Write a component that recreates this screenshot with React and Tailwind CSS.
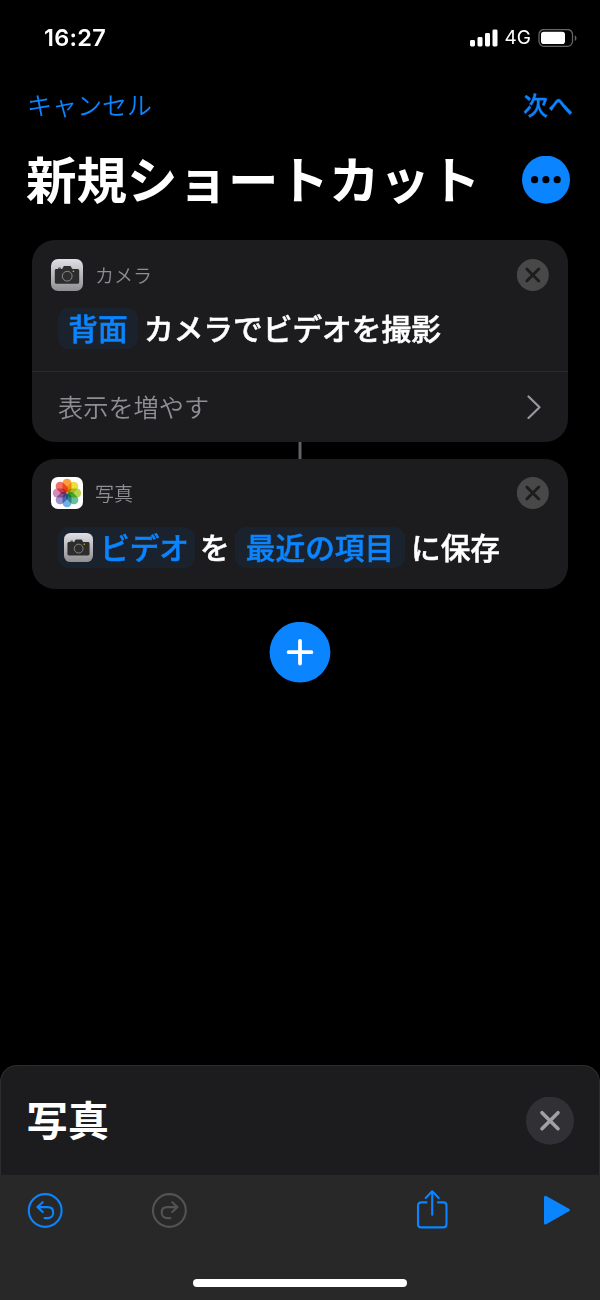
import React from "react";

const PETALS = ["#fb9f3c", "#efdf3a", "#b4d650", "#66c09a", "#6fb0e0", "#9d92cc", "#d48abd", "#f2716a"];

function CameraIcon({ className }) {
  return (
    <svg viewBox="0 0 32 32" className={className}>
      <defs>
        <linearGradient id="cameraTile" x1="0" y1="0" x2="0" y2="1">
          <stop offset="0" stopColor="#e0dfe4" />
          <stop offset="1" stopColor="#8f8e93" />
        </linearGradient>
      </defs>
      <rect width="32" height="32" rx="7" fill="url(#cameraTile)" />
      <path d="M7 9.200Q7 8.400 7.800 8.400H9.200Q10 8.400 10 9.200V11H7z" fill="#56565a" />
      <path d="M5.600 10H10.600C11.500 10 11.600 9.500 12 8.600C12.500 7.400 12.900 7.100 13.800 7.100H18.600C19.500 7.100 19.900 7.400 20.400 8.600C20.800 9.500 20.900 10 21.800 10H26.400C27.600 10 28.200 10.600 28.200 11.800V23C28.200 24.200 27.600 24.800 26.400 24.800H5.600C4.400 24.800 3.800 24.200 3.800 23V11.800C3.800 10.600 4.400 10 5.600 10z" fill="#2d2d2d" />
      <circle cx="16.200" cy="17.200" r="4.900" fill="#2d2d2d" stroke="#8b8a8f" strokeWidth="1" />
      <circle cx="22.400" cy="12.300" r=".8" fill="#e9c500" />
    </svg>
  );
}

function PhotosIcon({ className }) {
  return (
    <svg viewBox="0 0 32 32" className={className}>
      <rect width="32" height="32" rx="7" fill="#fff" />
      {PETALS.map((color, i) => (
        <rect
          key={color}
          x="11.5"
          y="1.800"
          width="9"
          height="13.700"
          rx="4.500"
          fill={color}
          transform={`rotate(${i * 45} 16 16)`}
          className="mix-blend-multiply"
        />
      ))}
    </svg>
  );
}

function RemoveButton() {
  return (
    <button className="block size-8 shrink-0">
      <svg viewBox="0 0 32 32" className="block size-8">
        <circle cx="15.800" cy="16" r="16" fill="#484848" />
        <path d="M9.800 10l12 12M21.800 10L9.800 22" stroke="#1c1c1e" strokeWidth="2.800" strokeLinecap="round" />
      </svg>
    </button>
  );
}

function CardHeader({ icon, name }) {
  return (
    <div className="flex h-8 items-center">
      {icon}
      <span className="ml-3 text-[19px] leading-8 font-[350] text-[#8e8e93]">{name}</span>
      <div className="ml-auto">
        <RemoveButton />
      </div>
    </div>
  );
}

const chip = "flex h-[41px] items-center rounded-[11px] bg-[#1a232d] pb-0.5 text-[#0a84ff]";
const phrase = "ml-[7px] flex h-[41px] items-center text-[29.700px] leading-[39px] font-medium [-webkit-text-stroke:0.5px]";

export default function App() {
  return (
    <div className="flex h-[1300px] w-[600px] flex-col overflow-hidden bg-black font-['Noto_Sans_CJK_JP',sans-serif] whitespace-nowrap text-white">
      <div className="flex h-[75px] items-center pr-[22px] pl-11 font-['Inter','Noto_Sans_CJK_JP',sans-serif]">
        <span className="text-[23.500px] leading-8 font-semibold tracking-[0.3px]">16:27</span>
        <svg viewBox="0 0 28 18" className="ml-auto h-[18px] w-7 shrink-0" fill="#fff">
          <rect x="0" y="11" width="5" height="6.500" rx="1.400" />
          <rect x="7.500" y="8" width="5" height="9.500" rx="1.400" />
          <rect x="15" y="4" width="5" height="13.500" rx="1.400" />
          <rect x="22.500" y=".5" width="5" height="17" rx="1.400" />
        </svg>
        <span className="ml-[6.500px] w-[33.500px] pt-px text-[19px] leading-8">4G</span>
        <svg viewBox="0 0 40 18" className="h-[18px] w-10 shrink-0">
          <rect x="1" y=".5" width="33.500" height="16.800" rx="5" fill="none" stroke="#666" strokeWidth="1.300" />
          <rect x="3" y="2.800" width="24" height="12.200" rx="2.800" fill="#fff" />
          <path d="M36.800 6.200c2.200.8 2.200 5 0 5.800z" fill="#666" />
        </svg>
      </div>

      <div className="flex h-[61px] items-center justify-between pr-[27px] pl-[27px] text-[#0a84ff]">
        <span className="pb-0.5 text-[25px] font-[350]">キャンセル</span>
        <span className="pb-0.5 text-[25px] font-medium [-webkit-text-stroke:0.3px]">次へ</span>
      </div>

      <div className="flex h-[87px] items-center justify-between pr-[30px] pl-[26px]">
        <h1 className="pb-[5px] text-[50.500px] leading-[60px] font-bold">新規ショートカット</h1>
        <svg viewBox="0 0 48 48" className="size-12 shrink-0">
          <circle cx="24" cy="23.700" r="24" fill="#0a84ff" />
          <circle cx="12.600" cy="23.700" r="3.600" />
          <circle cx="23.900" cy="23.700" r="3.600" />
          <circle cx="35.200" cy="23.700" r="3.600" />
        </svg>
      </div>

      <div className="mt-[17px] flex flex-col items-center">
        <section className="h-[202px] w-[536px] rounded-[23px] bg-[#1c1c1e]">
          <div className="h-[131px] pt-[19px] pr-[19px] pl-[19px]">
            <CardHeader icon={<CameraIcon className="size-8" />} name="カメラ" />
            <div className={`${phrase} mt-[17px]`}>
              <span className={`${chip} w-[80px] justify-center`}>背面</span>
              <span className="ml-1.5 pb-0.5">カメラでビデオを撮影</span>
            </div>
          </div>
          <div className="flex h-[71px] items-center border-t border-[#2b2b2e] pr-[27px] pl-[26px]">
            <span className="text-[25.200px] font-[350] text-[#8e8e93]">表示を増やす</span>
            <svg viewBox="0 0 14 24" className="ml-auto h-6 w-3.5" fill="none">
              <path d="M1.500 1.500L12.500 12.300L1.500 23" stroke="#98989d" strokeWidth="2.200" strokeLinecap="round" strokeLinejoin="round" />
            </svg>
          </div>
        </section>

        <div className="h-[17px] w-1 border-x-[0.5px] border-[#303032] bg-[#636366]" />

        <section className="h-[130px] w-[536px] rounded-[23px] bg-[#1c1c1e] pt-[18px] pr-[19px] pl-[19px]">
          <CardHeader icon={<PhotosIcon className="size-8" />} name="写真" />
          <div className={`${phrase} mt-[18px]`}>
            <span className={`${chip} w-[137px] pl-1.5`}>
              <CameraIcon className="mt-0.5 mr-[7px] size-[29px] shrink-0" />
              ビデオ
            </span>
            <span className="ml-[5px] w-[35px] pb-0.5">を</span>
            <span className={`${chip} w-[170px] justify-center`}>最近の項目</span>
            <span className="ml-1.5 pb-0.5">に保存</span>
          </div>
        </section>

        <button className="mt-[33px] size-[62px]">
          <svg viewBox="0 0 62 62" className="block size-[62px]">
            <circle cx="31" cy="30.200" r="30.400" fill="#0a84ff" />
            <path d="M31 18.800v22.800M19.600 30.200h22.800" stroke="#fff" strokeWidth="3.800" strokeLinecap="round" />
          </svg>
        </button>
      </div>

      <div className="mt-auto flex h-[110px] shrink-0 items-center justify-between rounded-t-[17px] border border-b-0 border-[#2d2d2f] bg-[#1c1c1e] pr-[25px] pl-[25.500px]">
        <h2 className="pb-[6px] text-[41.300px] leading-[60px] font-bold">写真</h2>
        <svg viewBox="0 0 48 48" className="size-12">
          <circle cx="24" cy="23.700" r="24" fill="#313135" />
          <path d="M16 15.700l16 16M32 15.700L16 31.700" stroke="#a0a0a6" strokeWidth="3.600" strokeLinecap="round" />
        </svg>
      </div>

      <div className="flex h-[125px] shrink-0 flex-col items-center bg-[#282828]">
        <div className="flex h-[71px] w-full items-center pr-[29px] pl-[27px]">
          <svg viewBox="0 0 36 36" className="size-9" fill="none" stroke="#0a84ff" strokeWidth="2.100" strokeLinecap="round" strokeLinejoin="round">
            <circle cx="18.200" cy="17.500" r="16.400" />
            <path d="M15.700 9.200L10.400 14.100L15.700 19M10.800 14.100H20.800C24.400 14.100 26.200 16.500 26.200 19.400C26.200 22.800 24 25.100 20.600 25.100H17.500" />
          </svg>
          <svg viewBox="0 0 36 36" className="ml-[88px] size-9" fill="none" stroke="#535353" strokeWidth="2.100" strokeLinecap="round" strokeLinejoin="round">
            <circle cx="18.400" cy="17.500" r="16.400" />
            <path d="M21.200 9.200L26.500 14.100L21.200 19M26.100 14.100H16.100C12.500 14.100 10.700 16.500 10.700 19.400C10.700 22.800 12.900 25.100 16.300 25.100H19.400" />
          </svg>
          <svg viewBox="0 0 32 40" className="mb-[3px] ml-auto h-10 w-8" fill="none" stroke="#0a84ff" strokeWidth="2.100" strokeLinecap="round" strokeLinejoin="round">
            <path d="M10.500 13.400H5.200Q2 13.400 2 16.600V35.200Q2 38.400 5.200 38.400H27.300Q30.500 38.400 30.500 35.200V16.600Q30.500 13.400 27.300 13.400H22M16.200 25.800V2.500M9.700 8.900L16.200 2.300L22.700 8.900" />
          </svg>
          <svg viewBox="0 0 28 30" className="mb-px ml-[95.500px] h-[30px] w-7" fill="#0a84ff">
            <path d="M1 2.300Q1 .2 3.200 1L26 13.700Q28 15 26 16.300L3.200 29.300Q1 30.200 1 28z" />
          </svg>
        </div>
        <div className="mt-[33px] h-2 w-[214px] rounded-full bg-white" />
      </div>
    </div>
  );
}
